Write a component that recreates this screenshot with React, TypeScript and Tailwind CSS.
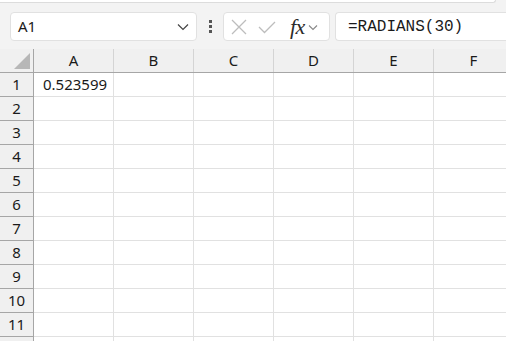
import React from "react"

const cols = ["A", "B", "C", "D", "E", "F"]
const rows = Array.from({ length: 12 }, (_, i) => i + 1)

export default function App() {
  return (
    <div className="w-[506px] h-[341px] overflow-hidden bg-[#f3f3f3] font-['Noto_Sans',sans-serif] text-[#1a1a1a]">
      {/* ribbon edge */}
      <div className="h-[3px] w-[496px] bg-white border-b border-r border-[#dcdcdc] rounded-br-[4px]" />

      {/* formula bar */}
      <div className="flex items-center h-[29px] mt-[9px] pl-[10px]">
        <div className="flex items-center w-[187px] h-[29px] bg-white border border-[#e1e1e1] rounded-[4px] pl-[7px] pr-[7px]">
          <span className="text-[15px] leading-none flex-1">A1</span>
          <svg width="12" height="8" viewBox="0 0 12 8" className="mt-[1px]">
            <path d="M1 1.5 L6 6.5 L11 1.5" fill="none" stroke="#444" strokeWidth="1.2" />
          </svg>
        </div>
        <div className="flex flex-col gap-[2px] w-[26px] items-center">
          <div className="w-[3px] h-[3px] bg-[#555]" />
          <div className="w-[3px] h-[3px] bg-[#555]" />
          <div className="w-[3px] h-[3px] bg-[#555]" />
        </div>
        <div className="flex items-center w-[107px] h-[29px] bg-white border border-[#e1e1e1] rounded-[4px] pl-[6px]">
          <svg width="18" height="18" viewBox="0 0 18 18">
            <path d="M2 2 L16 16 M16 2 L2 16" stroke="#bdbdbd" strokeWidth="1.3" />
          </svg>
          <svg width="18" height="18" viewBox="0 0 18 18" className="ml-[10px]">
            <path d="M1 9 L6.5 14.5 L17 4" fill="none" stroke="#bdbdbd" strokeWidth="1.3" />
          </svg>
          <span className="ml-[14px] font-['Liberation_Serif',serif] italic text-[22px] leading-none text-[#2b2b2b] tracking-[-0.5px]">fx</span>
          <svg width="10" height="7" viewBox="0 0 10 7" className="ml-[3px] mt-[2px]">
            <path d="M1 1.5 L5 5.5 L9 1.5" fill="none" stroke="#888" strokeWidth="1.1" />
          </svg>
        </div>
        <div className="flex items-center flex-1 h-[29px] ml-[5px] bg-white border border-[#e1e1e1] border-r-0 rounded-l-[4px] pl-[12px]">
          <span className="font-['Liberation_Mono',monospace] text-[16px] leading-none text-[#1a1a1a]">=RADIANS(30)</span>
        </div>
      </div>

      {/* grid */}
      <div className="mt-[8px] bg-white">
        <div className="flex h-[24px] bg-[#f0f0f0] border-b border-[#a6a6a6]">
          <div className="w-[34px] shrink-0 border-r border-[#a6a6a6] relative">
            <svg width="16" height="16" viewBox="0 0 16 16" className="absolute right-[3px] bottom-[3px]">
              <path d="M16 0 L16 16 L0 16 Z" fill="#b7b7b7" />
            </svg>
          </div>
          {cols.map((c) => (
            <div
              key={c}
              className="w-[80px] shrink-0 border-r border-[#d4d4d4] flex items-center justify-center text-[15px]"
            >
              {c}
            </div>
          ))}
        </div>
        {rows.map((r) => (
          <div key={r} className="flex h-[24px] border-b border-[#e1e1e1]">
            <div className="w-[34px] shrink-0 bg-[#f0f0f0] border-r border-[#a6a6a6] border-b border-b-[#a6a6a6] -mb-px flex items-center justify-center text-[15px]">
              {r < 12 ? r : ""}
            </div>
            {cols.map((c, i) => (
              <div
                key={c}
                className="w-[80px] shrink-0 border-r border-[#e1e1e1] flex items-center pl-[9px] text-[15px]"
              >
                {r === 1 && i === 0 ? "0.523599" : ""}
              </div>
            ))}
          </div>
        ))}
      </div>
    </div>
  )
}
